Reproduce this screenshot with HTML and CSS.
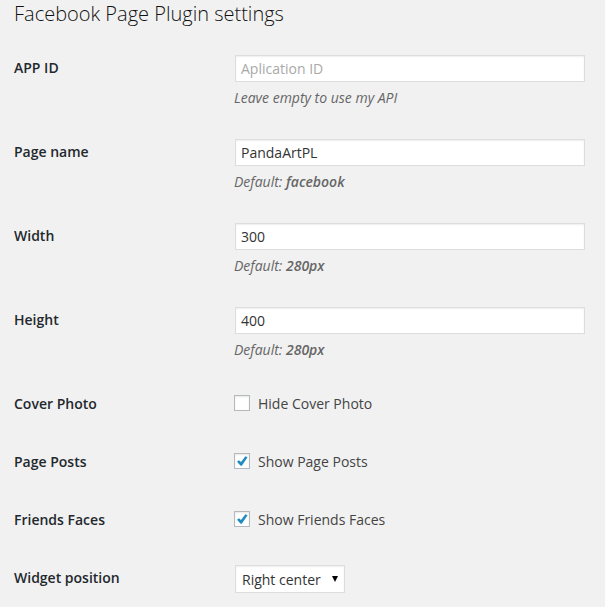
FILE: index.html
```html
<!DOCTYPE html>
<html lang="en">
<head>
<meta charset="utf-8">
<title>Facebook Page Plugin settings</title>
<link rel="stylesheet" href="styles.css">
</head>
<body>
<main class="settings">
<h1 class="title">Facebook Page Plugin settings</h1>
<form class="form">
<div class="row">
<label class="name" for="app-id">APP ID</label>
<div class="field"><div class="control"><input class="text" type="text" id="app-id" placeholder="Aplication ID"></div><p class="hint">Leave empty to use my API</p></div>
</div>
<div class="row">
<label class="name" for="page-name">Page name</label>
<div class="field"><div class="control"><input class="text" type="text" id="page-name" value="PandaArtPL"></div><p class="hint">Default: <b>facebook</b></p></div>
</div>
<div class="row">
<label class="name" for="width">Width</label>
<div class="field"><div class="control"><input class="text" type="text" id="width" value="300"></div><p class="hint">Default: <b>280px</b></p></div>
</div>
<div class="row">
<label class="name" for="height">Height</label>
<div class="field"><div class="control"><input class="text" type="text" id="height" value="400"></div><p class="hint">Default: <b>280px</b></p></div>
</div>
<div class="row">
<div class="name">Cover Photo</div>
<div class="field"><label class="option"><span class="tick"><input class="check" type="checkbox"><svg class="mark" viewBox="0 0 16 16"><path d="M3 8.7 5 7.2 7 9.1 11.4 3.3 13.6 4.2 7.8 12.8 6.6 12.8Z"/></svg></span>Hide Cover Photo</label></div>
</div>
<div class="row">
<div class="name">Page Posts</div>
<div class="field"><label class="option"><span class="tick"><input class="check" type="checkbox" checked><svg class="mark" viewBox="0 0 16 16"><path d="M3 8.7 5 7.2 7 9.1 11.4 3.3 13.6 4.2 7.8 12.8 6.6 12.8Z"/></svg></span>Show Page Posts</label></div>
</div>
<div class="row">
<div class="name">Friends Faces</div>
<div class="field"><label class="option"><span class="tick"><input class="check" type="checkbox" checked><svg class="mark" viewBox="0 0 16 16"><path d="M3 8.7 5 7.2 7 9.1 11.4 3.3 13.6 4.2 7.8 12.8 6.6 12.8Z"/></svg></span>Show Friends Faces</label></div>
</div>
<div class="row">
<label class="name" for="position">Widget position</label>
<div class="field"><div class="control picker"><select class="select" id="position"><option>Right center</option></select><svg class="arrow" viewBox="0 0 6 6"><path d="M0 0H6L3 6Z"/></svg></div></div>
</div>
</form>
</main>
</body>
</html>
```

FILE: styles.css
```css
* {
  box-sizing: border-box;
}

body {
  margin: 0;
  background: #f1f1f1;
  color: #444;
  font: 14px/20px "Open Sans", sans-serif;
}

.settings {
  padding: 0 20px 0 14px;
}

.title {
  margin: 0;
  color: #111;
  font-size: 20px;
  font-weight: 300;
  line-height: 28px;
}

.form {
  padding-top: 12px;
}

.row {
  display: grid;
  grid-template-columns: 220px 1fr;
  padding: 15px 0 14px;
}

.name {
  padding-top: 3px;
  color: #23282d;
  font-weight: 600;
}

.field {
  min-height: 29px;
}

.control {
  margin-left: 1px;
}

.text {
  display: block;
  width: 100%;
  height: 27px;
  padding: 3px 5px;
  border: 1px solid #ddd;
  background: #fff;
  box-shadow: inset 0 1px 2px rgba(0, 0, 0, 0.07);
  color: #333;
  font: inherit;
}

.text::placeholder {
  color: #a9a9a9;
}

.hint {
  margin: 6px 0 2px;
  color: #666;
  font-style: italic;
}

.hint b {
  font-weight: 600;
}

.option {
  display: flex;
  align-items: flex-start;
  gap: 8px;
  padding-top: 3px;
}

.tick {
  position: relative;
  width: 16px;
  height: 16px;
  margin-top: 1px;
}

.check {
  appearance: none;
  display: block;
  width: 16px;
  height: 16px;
  margin: 0;
  border: 1px solid #b4b9be;
  background: #fff;
  box-shadow: inset 0 1px 2px rgba(0, 0, 0, 0.1);
}

.mark {
  position: absolute;
  inset: 0;
  display: none;
  fill: #1e8cbe;
}

.check:checked + .mark {
  display: block;
}

.picker {
  position: relative;
  width: fit-content;
}

.select {
  appearance: none;
  display: block;
  height: 28px;
  padding: 3px 23px 1px 6px;
  border: 1px solid #ddd;
  border-radius: 0;
  background: #fff;
  box-shadow: inset 0 1px 2px rgba(0, 0, 0, 0.07);
  color: #333;
  font: inherit;
}

.arrow {
  position: absolute;
  top: 11px;
  right: 7px;
  width: 6px;
  height: 6px;
  pointer-events: none;
}
```
